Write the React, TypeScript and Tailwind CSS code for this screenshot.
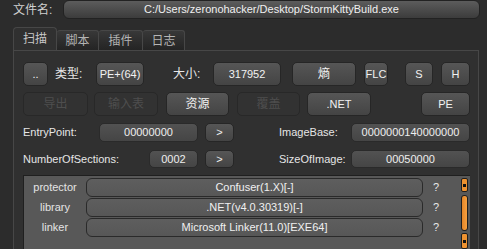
import React from 'react';

const btn =
  'flex items-center justify-center rounded-[5px] border border-[#262626] bg-gradient-to-b from-[#565656] to-[#444444] text-[#f2f2f2] shrink-0';
const off =
  'flex items-center justify-center rounded-[5px] border border-[#282828] bg-[#323232] text-[#4e4e4e] shrink-0';
const field =
  'flex items-center justify-center rounded-[5px] border border-[#2a2a2a] bg-gradient-to-b from-[#525252] to-[#454545] text-[#eeeeee] shrink-0';
const cjk = 'text-[12px]';

function ScrollCap({ h }: { h: string }) {
  return (
    <div className={`flex ${h} items-center justify-center rounded-[2px] border border-[#1e1e1e] bg-[#ee9230]`}>
      <div className="h-[3px] w-[3px] bg-[#111]" />
    </div>
  );
}

export default function App() {
  const rows = [
    { k: 'protector', v: 'Confuser(1.X)[-]' },
    { k: 'library', v: '.NET(v4.0.30319)[-]' },
    { k: 'linker', v: 'Microsoft Linker(11.0)[EXE64]' },
  ];

  return (
    <div
      className="flex h-[249px] w-[487px] flex-col overflow-hidden bg-[#2c2c2c] text-[11px] text-[#e6e6e6]"
      style={{ fontFamily: '"Liberation Sans", "Noto Sans CJK SC", sans-serif' }}
    >
      {/* file name */}
      <div className="flex h-[21px] items-end">
        <div className={`w-[63px] pl-[13px] text-[#d0d0d0] ${cjk}`}>文件名:</div>
        <div className="flex h-[19px] w-[417px] items-center justify-center rounded-[6px] border border-[#222] bg-gradient-to-b from-[#5c5c5c] to-[#3c3c3c] text-[#f0f0f0]">
          C:/Users/zeronohacker/Desktop/StormKittyBuild.exe
        </div>
      </div>

      {/* tabs */}
      <div className="ml-[13px] mt-[8px] flex h-[23px] items-end">
        <div className={`flex h-[23px] w-[44px] items-center justify-center rounded-t-[4px] border border-b-0 border-[#474747] bg-[#303030] text-[#c8c8c8] ${cjk}`}>
          扫描
        </div>
        {['脚本', '插件', '日志'].map((t, i) => (
          <div
            key={t}
            className={`flex h-[20px] items-center justify-center rounded-t-[3px] border border-b-0 border-l-0 border-[#474747] bg-gradient-to-b from-[#383838] to-[#242424] text-[#b4b4b4] ${cjk} ${i === 1 ? 'w-[44px]' : 'w-[42px]'}`}
          >
            {t}
          </div>
        ))}
      </div>

      {/* panel */}
      <div className="ml-[13px] flex w-[466px] flex-1 flex-col border border-b-0 border-[#474747] bg-[#303030] pl-[9px] pt-[11px]">
        {/* row 1 */}
        <div className="flex h-[24px] items-stretch">
          <div className={`${btn} w-[25px]`}>..</div>
          <div className={`ml-[7px] flex w-[41px] items-center ${cjk}`}>类型:</div>
          <div className={`${btn} w-[48px]`}>PE+(64)</div>
          <div className={`ml-[29px] flex w-[40px] items-center ${cjk}`}>大小:</div>
          <div className={`${btn} w-[68px]`}>317952</div>
          <div className={`${btn} ml-[11px] w-[64px] ${cjk}`}>熵</div>
          <div className={`${btn} ml-[8px] w-[24px]`}>FLC</div>
          <div className={`${btn} ml-[17px] w-[28px]`}>S</div>
          <div className={`${btn} ml-[8px] w-[29px]`}>H</div>
        </div>

        {/* row 2 */}
        <div className={`mt-[6px] flex h-[24px] items-stretch ${cjk}`}>
          <div className={`${off} w-[65px]`}>导出</div>
          <div className={`${off} ml-[6px] w-[64px]`}>输入表</div>
          <div className={`${btn} ml-[8px] w-[63px]`}>资源</div>
          <div className={`${off} ml-[8px] w-[63px]`}>覆盖</div>
          <div className={`${btn} ml-[7px] w-[64px] text-[11px]`}>.NET</div>
          <div className={`${btn} ml-[50px] w-[49px] text-[11px]`}>PE</div>
        </div>

        {/* row 3 */}
        <div className="mt-[7px] flex h-[19px] items-stretch">
          <div className="flex w-[76px] items-center">EntryPoint:</div>
          <div className={`${field} w-[99px]`}>00000000</div>
          <div className={`${btn} ml-[7px] w-[29px]`}>&gt;</div>
          <div className="ml-[45px] flex w-[72px] items-center">ImageBase:</div>
          <div className={`${field} w-[119px]`}>0000000140000000</div>
        </div>

        {/* row 4 */}
        <div className="mt-[8px] flex h-[18px] items-stretch">
          <div className="flex w-[126px] items-center">NumberOfSections:</div>
          <div className={`${field} w-[49px]`}>0002</div>
          <div className={`${btn} ml-[7px] w-[29px]`}>&gt;</div>
          <div className="ml-[45px] flex w-[72px] items-center">SizeOfImage:</div>
          <div className={`${field} w-[119px]`}>00050000</div>
        </div>

        {/* result list */}
        <div className="mt-[7px] flex w-[447px] flex-1 border-l border-t border-[#1f1f1f] bg-[#585858] pt-[1px]">
          <div className="flex w-[437px] flex-col gap-[1px] pt-[1px]">
            {rows.map((r) => (
              <div key={r.k} className="flex h-[19px] items-center">
                <div className="w-[62px] text-center text-[#e4e4e4]">{r.k}</div>
                <div className="flex h-[19px] w-[337px] items-center justify-center rounded-[6px] border border-[#2a2a2a] bg-gradient-to-b from-[#5e5e5e] to-[#575757] text-[#f0f0f0]">
                  {r.v}
                </div>
                <div className="ml-[10px] text-[#e8e8e8]">?</div>
              </div>
            ))}
          </div>
          <div className="flex w-[7px] flex-col pt-[1px]">
            <ScrollCap h="h-[14px]" />
            <div className="mt-[3px] h-[36px] rounded-[3px] border border-[#1e1e1e] bg-gradient-to-r from-[#e28427] to-[#f5a040]" />
            <div className="mt-[2px]">
              <ScrollCap h="h-[16px]" />
            </div>
          </div>
        </div>
      </div>
    </div>
  );
}
